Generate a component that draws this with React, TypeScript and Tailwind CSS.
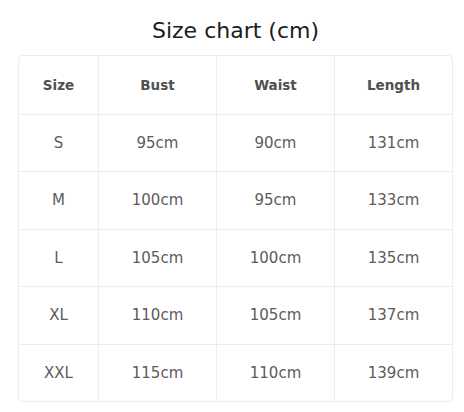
const rows = [
  ['S', '95cm', '90cm', '131cm'],
  ['M', '100cm', '95cm', '133cm'],
  ['L', '105cm', '100cm', '135cm'],
  ['XL', '110cm', '105cm', '137cm'],
  ['XXL', '115cm', '110cm', '139cm'],
]

const headers = ['Size', 'Bust', 'Waist', 'Length']

export default function App() {
  return (
    <div className="min-h-[412px] w-[464px] bg-white pt-[15px]">
      <h2 className="ml-[18px] mb-[8px] w-[435px] text-center font-['DejaVu_Sans',sans-serif] text-[22px] leading-[32px] text-[#1c1c1c]">
        Size chart (cm)
      </h2>
      <div className="ml-[18px] w-[435px] overflow-hidden rounded-[4px] border border-[#ececec] font-['DejaVu_Sans',sans-serif] text-[15px] text-[#5c5c5c]">
        <div className="grid h-[58px] grid-cols-[79px_118px_118px_1fr]">
          {headers.map((h, i) => (
            <div
              key={h}
              className={`flex items-center justify-center text-[13.5px] font-bold text-[#505050] ${i > 0 ? 'border-l border-[#ececec]' : ''}`}
            >
              {h}
            </div>
          ))}
        </div>
        {rows.map(r => (
          <div key={r[0]} className="grid h-[57.4px] grid-cols-[79px_118px_118px_1fr] border-t border-[#ececec]">
            {r.map((c, i) => (
              <div
                key={i}
                className={`flex items-center justify-center ${i > 0 ? 'border-l border-[#ececec]' : ''}`}
              >
                {c}
              </div>
            ))}
          </div>
        ))}
      </div>
    </div>
  )
}
